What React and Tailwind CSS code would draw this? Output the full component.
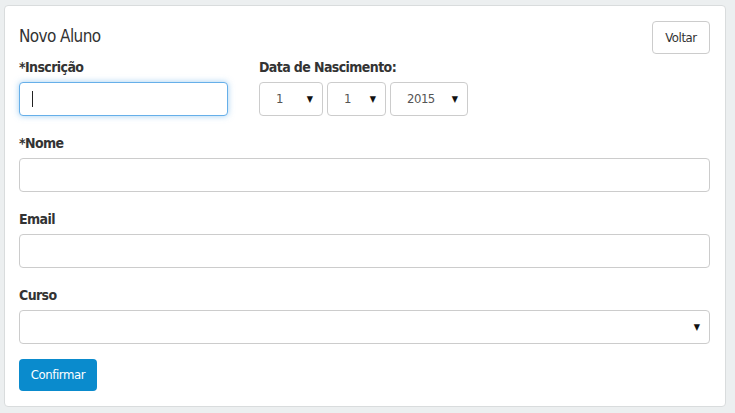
import React from "react";

const FONT = "font-['DejaVu_Sans_Condensed','Liberation_Sans',sans-serif]";

function Arrow() {
  return <span className="text-[9px] text-[#111] leading-none">▼</span>;
}

function FakeSelect({ value, width }) {
  return (
    <div className={`${width} h-[34px] rounded-[4px] border border-[#cccccc] bg-white flex items-center justify-between pl-[16px] pr-[9px]`}>
      <span className="text-[13px] tracking-[-0.5px] text-[#555]">{value}</span>
      <Arrow />
    </div>
  );
}

const LABEL = "block h-5 leading-5 mb-[5px] text-[14px] tracking-[-0.6px] font-bold text-[#333]";

export default function App() {
  return (
    <div className={`w-[735px] h-[413px] bg-[#eceff0] pt-[5px] pl-[4px] ${FONT}`}>
      <div className="w-[722px] h-[402px] bg-white border border-[#d9dcdd] rounded-[4px] pl-[14px] pr-[15px] pt-[15px]">
        {/* header */}
        <div className="flex items-center justify-between h-[33px]">
          <h1 className="text-[17px] tracking-[-0.6px] text-[#333] font-light leading-none -mt-[2px]">Novo Aluno</h1>
          <button className="h-[33px] w-[58px] rounded-[4px] border border-[#cccccc] bg-white text-[13px] tracking-[-0.4px] text-[#333]">
            Voltar
          </button>
        </div>

        {/* inscricao + data */}
        <div className="flex mt-[3px] mb-[17px]">
          <div className="w-[209px]">
            <label className={LABEL}>*Inscrição</label>
            <div className="h-[34px] rounded-[4px] border border-[#66afe9] shadow-[0_0_6px_rgba(102,175,233,0.6)] bg-white flex items-center pl-[12px]">
              <span className="block w-px h-[16px] bg-[#222]" />
            </div>
          </div>
          <div className="ml-[31px]">
            <label className={LABEL}>Data de Nascimento:</label>
            <div className="flex gap-[4px]">
              <FakeSelect value="1" width="w-[64px]" />
              <FakeSelect value="1" width="w-[59px]" />
              <FakeSelect value="2015" width="w-[78px]" />
            </div>
          </div>
        </div>

        {["*Nome", "Email"].map(l => (
          <div key={l} className="mb-[17px]">
            <label className={LABEL}>{l}</label>
            <div className="h-[34px] rounded-[4px] border border-[#cccccc] bg-white" />
          </div>
        ))}

        <div className="mb-[15px]">
          <label className={LABEL}>Curso</label>
          <div className="h-[34px] rounded-[4px] border border-[#cccccc] bg-white flex items-center justify-end pr-[9px]">
            <Arrow />
          </div>
        </div>

        <button className="h-[32px] w-[78px] rounded-[4px] bg-[#0a8bcd] text-white text-[13px] tracking-[-0.4px]">Confirmar</button>
      </div>
    </div>
  );
}
